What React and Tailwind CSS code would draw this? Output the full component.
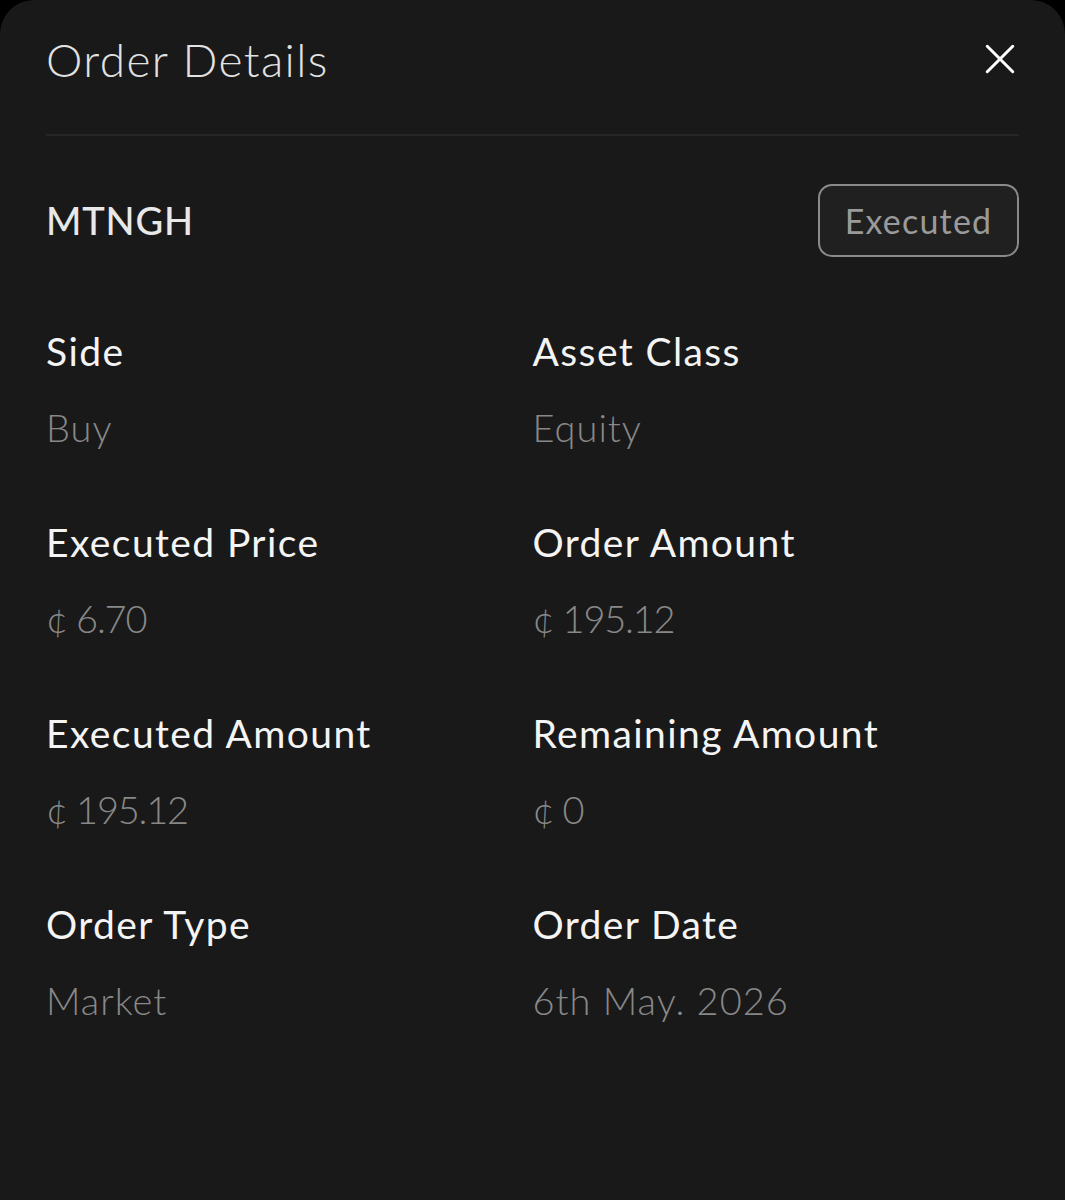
import React from 'react';

const fields = [
  { label: 'Side', value: 'Buy' },
  { label: 'Asset Class', value: 'Equity' },
  { label: 'Executed Price', amount: '6.70' },
  { label: 'Order Amount', amount: '195.12' },
  { label: 'Executed Amount', amount: '195.12' },
  { label: 'Remaining Amount', amount: '0' },
  { label: 'Order Type', value: 'Market' },
  { label: 'Order Date', value: '6th May. 2026' },
];

const App = () => {
  return (
    <div className="bg-black min-h-[1200px]" style={{ fontFamily: 'Lato, "Open Sans", sans-serif' }}>
      <div className="bg-[#191919] min-h-[1200px] rounded-t-[34px] px-[46px]">
        <div className="flex items-center justify-between h-[118px]">
          <h1 className="text-[46px] font-light text-[#e2e2e2] tracking-[1.4px]">Order Details</h1>
          <button className="text-white mr-[2px]">
            <svg width="34" height="34" viewBox="0 0 24 24" fill="none" stroke="currentColor" strokeWidth="2.1" strokeLinecap="round">
              <path d="M3 3L21 21M21 3L3 21" />
            </svg>
          </button>
        </div>
        <div className="h-[2px] bg-[#262626] mt-[16px]" />

        <div className="flex items-center justify-between mt-[48px]">
          <span className="text-[38px] font-medium text-[#e8e8e8] tracking-[0.8px]">MTNGH</span>
          <span className="border-2 border-[#8a8a8a] bg-[#202020] rounded-[14px] h-[73px] w-[201px] flex items-center justify-center text-[34px] text-[#9a9a9a] tracking-[1.2px]">
            Executed
          </span>
        </div>

        <div className="grid grid-cols-2 mt-[72px] gap-y-[71px]">
          {fields.map((f, i) => (
            <div key={i} className="flex flex-col">
              <span className="text-[39px] leading-[44px] text-[#f4f4f4] tracking-[1.4px]">{f.label}</span>
              {f.amount !== undefined ? (
                <span className="text-[38px] leading-[44px] mt-[32px] text-[#888888] font-light">
                  <span className="mr-[8px]">¢</span>
                  <span className="tracking-[-1.2px]">{f.amount}</span>
                </span>
              ) : (
                <span className="text-[38px] leading-[44px] mt-[32px] text-[#888888] font-light tracking-[1px]">{f.value}</span>
              )}
            </div>
          ))}
        </div>
      </div>
    </div>
  );
};

export default App;
